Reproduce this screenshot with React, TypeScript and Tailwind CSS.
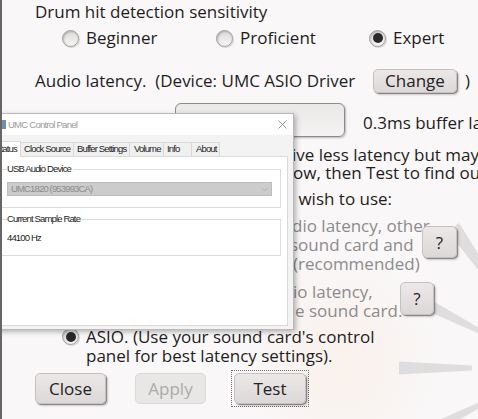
import React from "react";

const CX = 550;
const CY = 368;
function wedge(deg: number, r1: number, r2: number, w1: number, w2: number) {
  const t = (deg * Math.PI) / 180;
  const dx = Math.cos(t);
  const dy = Math.sin(t);
  const nx = -dy;
  const ny = dx;
  const p = (r: number, w: number) => `${(CX + r * dx + w * nx).toFixed(1)},${(CY + r * dy + w * ny).toFixed(1)}`;
  return [p(r1, w1), p(r2, w2), p(r2, -w2), p(r1, -w1)].join(" ");
}

function Watermark() {
  return (
    <svg className="absolute left-0 top-0" width="478" height="419" viewBox="0 0 478 419">
      <defs>
        <radialGradient id="warm" cx="0.5" cy="0.5" r="0.5">
          <stop offset="0" stopColor="#fbeadb" stopOpacity="0.45" />
          <stop offset="1" stopColor="#fbeadb" stopOpacity="0" />
        </radialGradient>
      </defs>
      <ellipse cx="340" cy="360" rx="100" ry="110" fill="url(#warm)" />
      <g fill="#dfdddd">
        <polygon points={wedge(153, 80, 160, 2.5, 7)} />
        <polygon points={wedge(180, 80, 153, 2.5, 6.5)} />
        <polygon points={wedge(207, 80, 155, 2.5, 6.5)} />
        <polygon points={wedge(235, 100, 172, 3, 7)} />
      </g>
    </svg>
  );
}

function Radio({ checked }: { checked?: boolean }) {
  return (
    <span className="w-[17px] h-[17px] shrink-0 rounded-full border border-[#a19c9c] bg-gradient-to-b from-[#dedada] to-[#f7f5f5] shadow-[inset_1px_1px_2px_rgba(0,0,0,0.2),1px_1px_1px_rgba(0,0,0,0.15)] flex items-center justify-center">
      {checked && <span className="w-[10px] h-[10px] rounded-full bg-[#2a2828]" />}
    </span>
  );
}

function GtkButton({
  children,
  className,
  disabled,
}: {
  children: React.ReactNode;
  className: string;
  disabled?: boolean;
}) {
  return (
    <div
      className={
        "flex shrink-0 items-center justify-center rounded-[5px] border " +
        (disabled
          ? "border-[#dcd8d8] bg-[#e9e6e6] text-[#ababab] "
          : "border-[#c6c1c1] bg-gradient-to-b from-[#ece8e8] to-[#ddd8d8] text-[#222] shadow-[1px_1px_0_#8c8686,2px_2px_2px_rgba(0,0,0,0.2)] ") +
        className
      }
    >
      {children}
    </div>
  );
}

function ControlPanel() {
  return (
    <div className="absolute left-[-10px] top-[113px] w-[302px] h-[217px] flex flex-col whitespace-nowrap border border-[#b9b9b9] bg-[#f3f3f3] shadow-[2px_2px_5px_rgba(0,0,0,0.28)] font-['Liberation_Sans',Arial,sans-serif] text-[9.5px] tracking-[-0.85px] leading-[12px] text-[#1c1c1c]">
      <div className="h-[21px] shrink-0 bg-white flex items-center">
        <span className="ml-[1px] w-[12px] h-[9px] bg-[#6f8fb0] shrink-0" />
        <span className="ml-[2px] text-[9.5px] tracking-[-0.75px] text-[#9b9b9b]">UMC Control Panel</span>
        <svg className="ml-auto mr-[6px]" width="9" height="9" viewBox="0 0 9 9">
          <path d="M0.5 0.5 L8.5 8.5 M8.5 0.5 L0.5 8.5" stroke="#8a8a8a" strokeWidth="0.9" />
        </svg>
      </div>
      <div className="h-[21px] shrink-0 flex items-end">
        <div className="w-[28px] h-[16px] -mb-[1px] relative z-10 bg-white border border-b-0 border-[#d9d9d9] pl-[1px] pt-[1px]">Status</div>
        <div className="w-[53px] h-[14px] bg-[#f0f0f0] border border-l-0 border-b-0 border-[#d9d9d9] pl-[3px]">Clock Source</div>
        <div className="w-[56px] h-[14px] bg-[#f0f0f0] border border-l-0 border-b-0 border-[#d9d9d9] pl-[3px]">Buffer Settings</div>
        <div className="w-[34px] h-[14px] bg-[#f0f0f0] border border-l-0 border-b-0 border-[#d9d9d9] pl-[4px]">Volume</div>
        <div className="w-[28px] h-[14px] bg-[#f0f0f0] border border-l-0 border-b-0 border-[#d9d9d9] pl-[3px]">Info</div>
        <div className="w-[28px] h-[14px] bg-[#f0f0f0] border border-l-0 border-b-0 border-[#d9d9d9] pl-[4px]">About</div>
      </div>
      <div className="h-[170px] shrink-0 mr-[5px] bg-white border border-[#d9d9d9]">
        <fieldset className="mt-[6px] ml-[4px] mr-[6px] border border-[#dcdcdc] pb-[11px]">
          <legend className="ml-[8px] pr-[2px]">USB Audio Device</legend>
          <div className="mt-[7px] ml-[8px] w-[265px] h-[14px] bg-[#cccccc] border border-[#bdbdbd] flex items-center pl-[3px] text-[#8b8b8b]">
            <span>UMC1820 (953993CA)</span>
            <svg className="ml-auto mr-[3px]" width="7" height="5" viewBox="0 0 7 5">
              <path d="M0.5 1 L3.5 4 L6.5 1" stroke="#a8a8a8" strokeWidth="0.8" fill="none" />
            </svg>
          </div>
        </fieldset>
        <fieldset className="mt-[5px] ml-[4px] mr-[6px] border border-[#dcdcdc] pb-[11px]">
          <legend className="ml-[8px] pr-[2px]">Current Sample Rate</legend>
          <div className="mt-[7px] ml-[8px]">44100 Hz</div>
        </fieldset>
      </div>
    </div>
  );
}

export default function App() {
  return (
    <div className="relative w-[478px] h-[419px] overflow-hidden bg-[#f9f7f8] border-l-2 border-[#676565] font-['Open_Sans',sans-serif] text-[17px] text-[#1f1d1d]">
      <Watermark />
      <div className="relative pl-[33px] whitespace-nowrap">
        <div className="h-[24px] leading-[24px]">Drum hit detection sensitivity</div>
        <div className="mt-[2px] h-[24px] flex items-center pl-[27px]">
          <div className="w-[154px] shrink-0 flex items-center gap-[7px]">
            <Radio />
            <span>Beginner</span>
          </div>
          <div className="w-[153px] shrink-0 flex items-center gap-[7px]">
            <Radio />
            <span>Proficient</span>
          </div>
          <div className="flex items-center gap-[7px]">
            <Radio checked />
            <span>Expert</span>
          </div>
        </div>
        <div className="mt-[18px] h-[25px] flex items-center">
          <span className="w-[338px] shrink-0 whitespace-pre">Audio latency.  (Device: UMC ASIO Driver</span>
          <GtkButton className="w-[84px] h-[24px]">Change</GtkButton>
          <span className="ml-[8px]">)</span>
        </div>
        <div className="mt-[10px] h-[34px] flex items-center">
          <div className="ml-[140px] w-[170px] h-[34px] shrink-0 rounded-[6px] border border-[#8d8a8a] bg-gradient-to-b from-[#ebe8e8] to-[#f4f2f2] shadow-[1px_1px_2px_rgba(0,0,0,0.25)]" />
          <span className="ml-[18px] mt-[6px] shrink-0">0.3ms buffer latency</span>
        </div>
        <div className="mt-[9px] leading-[18px]">
          <div className="flex">
            <span className="w-[257px] shrink-0 flex justify-end overflow-hidden">
              <span className="shrink-0">Smaller buffer sizes g</span>
            </span>
            <span className="shrink-0">ive less latency but may cause crackles.</span>
          </div>
          <div className="flex">
            <span className="w-[258px] shrink-0 flex justify-end overflow-hidden">
              <span className="shrink-0">Choose the lowest setting bel</span>
            </span>
            <span className="shrink-0">ow, then Test to find out.</span>
          </div>
        </div>
        <div className="mt-[8px] leading-[18px] flex">
          <span className="w-[259px] shrink-0 flex justify-end overflow-hidden">
            <span className="shrink-0">Select the audio driver you</span>
          </span>
          <span className="shrink-0 whitespace-pre"> wish to use:</span>
        </div>
        <div className="relative mt-[8px] leading-[19px] flex pl-[27px] text-[#8d8b8b]">
          <div className="pt-[1px] shrink-0">
            <Radio />
          </div>
          <div className="ml-[7px] shrink-0">
            <div className="flex">
              <span className="w-[206px] shrink-0 flex justify-end overflow-hidden">
                <span className="shrink-0">WASAPI. (Low au</span>
              </span>
              <span className="shrink-0">dio latency, other</span>
            </div>
            <div className="flex">
              <span className="w-[204px] shrink-0 flex justify-end overflow-hidden">
                <span className="shrink-0">programs can't use the</span>
              </span>
              <span className="shrink-0">sound card and</span>
            </div>
            <div className="flex">
              <span className="w-[207px] shrink-0 flex justify-end overflow-hidden">
                <span className="shrink-0">best performance</span>
              </span>
              <span className="shrink-0">(recommended)</span>
            </div>
          </div>
          <GtkButton className="absolute left-[387px] top-[10px] w-[35px] h-[32px] text-[#222]">?</GtkButton>
        </div>
        <div className="relative mt-[9px] leading-[19px] flex pl-[27px] text-[#8d8b8b]">
          <div className="pt-[1px] shrink-0">
            <Radio />
          </div>
          <div className="ml-[7px] shrink-0">
            <div className="flex">
              <span className="w-[207px] shrink-0 flex justify-end overflow-hidden">
                <span className="shrink-0">DirectSound. (High aud</span>
              </span>
              <span className="shrink-0">io latency,</span>
            </div>
            <div className="flex">
              <span className="w-[209px] shrink-0 flex justify-end overflow-hidden">
                <span className="shrink-0">other programs can share th</span>
              </span>
              <span className="shrink-0">e sound card.</span>
            </div>
          </div>
          <GtkButton className="absolute left-[365px] top-[0px] w-[34px] h-[33px] text-[#222]">?</GtkButton>
        </div>
        <div className="mt-[7px] leading-[19px] flex pl-[27px]">
          <div className="pt-[1px] shrink-0">
            <Radio checked />
          </div>
          <div className="ml-[7px]">
            <div>ASIO. (Use your sound card's control</div>
            <div>panel for best latency settings).</div>
          </div>
        </div>
        <div className="mt-[8px] flex items-start">
          <GtkButton className="w-[71px] h-[31px]">Close</GtkButton>
          <GtkButton disabled className="ml-[29px] w-[71px] h-[31px]">Apply</GtkButton>
          <div className="ml-[25px] -mt-[3px] p-[2px] border border-dotted border-[#6d6d6d]">
            <GtkButton className="w-[72px] h-[31px]">Test</GtkButton>
          </div>
        </div>
      </div>
      <ControlPanel />
    </div>
  );
}
